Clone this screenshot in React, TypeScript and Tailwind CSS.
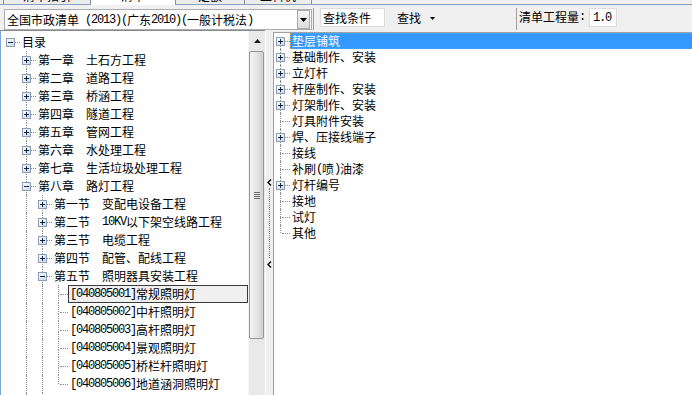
import React from "react";

const cjk = "font-['Noto_Sans_CJK_SC','Noto_Sans_CJK_JP',sans-serif] text-[12px] leading-[14px]";
const mono = "font-['Liberation_Mono',monospace] text-[12px] leading-[14px] tracking-[-1.2px] whitespace-pre";

function T({ s }: { s: string }) {
  const parts = s.match(/[\x00-\x7f]+|[^\x00-\x7f]+/g) || [];
  return (
    <>
      {parts.map((p, i) =>
        /^[\x00-\x7f]/.test(p) ? (
          <span key={i} className={mono}>
            {p}
          </span>
        ) : (
          <span key={i} className={cjk}>
            {p}
          </span>
        )
      )}
    </>
  );
}

function Box({ open }: { open?: boolean }) {
  return (
    <svg width="9" height="9" viewBox="0 0 9 9" className="block">
      <defs>
        <linearGradient id="tvbox" x1="0" y1="0" x2="1" y2="1">
          <stop offset="0" stopColor="#ffffff" />
          <stop offset="1" stopColor="#c9d4e2" />
        </linearGradient>
      </defs>
      <rect x="0.5" y="0.5" width="8" height="8" fill="url(#tvbox)" stroke="#8a9db7" />
      <path d="M2 4.5h5" stroke="#16233d" />
      {!open && <path d="M4.5 2v5" stroke="#16233d" />}
    </svg>
  );
}

type LNode = {
  label: string;
  guides: boolean[];
  last?: boolean;
  noTop?: boolean;
  kids?: boolean;
  open?: boolean;
  sel?: boolean;
};

const dot = "border-dotted border-[#8c8c8c]";

function LeftRow({ n }: { n: LNode }) {
  return (
    <div className="flex h-[18px] items-stretch">
      {n.guides.map((g, i) => (
        <div key={i} className="w-4 shrink-0 h-full">
          {g && <div className={`ml-[8px] h-full border-l ${dot}`} />}
        </div>
      ))}
      <div className="relative w-4 shrink-0 h-full">
        {!n.noTop && <div className={`absolute left-[8px] top-0 h-[9px] border-l ${dot}`} />}
        {!n.last && <div className={`absolute left-[8px] top-[10px] h-[8px] border-l ${dot}`} />}
        <div className={`absolute left-[10px] top-[9px] w-[8px] border-t ${dot}`} />
        {n.kids && (
          <div className="absolute left-[4px] top-[5px]">
            <Box open={n.open} />
          </div>
        )}
      </div>
      <div
        className={`ml-[2px] flex items-center border px-[1px] whitespace-nowrap text-black ${
          n.sel ? "flex-1 border-[#3a3a3a] bg-[#f0f0f0]" : "border-transparent"
        }`}
      >
        <T s={n.label} />
      </div>
    </div>
  );
}

function RightRow({ n }: { n: LNode }) {
  return (
    <div className="flex h-[16px] items-stretch">
      <div className="relative w-[14px] shrink-0 h-full">
        {!n.noTop && <div className={`absolute left-[6px] top-0 h-[8px] border-l ${dot}`} />}
        {!n.last && <div className={`absolute left-[6px] top-[8px] h-[8px] border-l ${dot}`} />}
        <div className={`absolute left-[8px] top-[8px] w-[8px] border-t ${dot}`} />
        {n.kids && (
          <div className="absolute left-[2px] top-[4px]">
            <Box open={n.open} />
          </div>
        )}
      </div>
      <div
        className={`ml-[2px] flex items-center border px-[1px] whitespace-nowrap ${
          n.sel
            ? "min-w-[430px] border-dotted border-[#f08a1c] bg-[#3399ff] text-white"
            : "border-transparent text-black"
        }`}
      >
        <T s={n.label} />
      </div>
    </div>
  );
}

const chapters = [
  "第一章  土石方工程",
  "第二章  道路工程",
  "第三章  桥涵工程",
  "第四章  隧道工程",
  "第五章  管网工程",
  "第六章  水处理工程",
  "第七章  生活垃圾处理工程",
];
const sections = [
  "第一节  变配电设备工程",
  "第二节  10KV以下架空线路工程",
  "第三节  电缆工程",
  "第四节  配管、配线工程",
];
const leaves = [
  "[040805001]常规照明灯",
  "[040805002]中杆照明灯",
  "[040805003]高杆照明灯",
  "[040805004]景观照明灯",
  "[040805005]桥栏杆照明灯",
  "[040805006]地道涵洞照明灯",
];

const leftNodes: LNode[] = [
  { label: "目录", guides: [], noTop: true, last: true, kids: true, open: true },
  ...chapters.map((c) => ({ label: c, guides: [false], kids: true })),
  { label: "第八章  路灯工程", guides: [false], kids: true, open: true },
  ...sections.map((s) => ({ label: s, guides: [false, true], kids: true })),
  { label: "第五节  照明器具安装工程", guides: [false, true], kids: true, open: true },
  ...leaves.map((l, i) => ({
    label: l,
    guides: [false, true, true],
    last: i === leaves.length - 1,
    sel: i === 0,
  })),
  { label: "第六节  防雷接地装置工程", guides: [false, true], kids: true },
];

const rightNodes: LNode[] = [
  { label: "垫层铺筑", guides: [], kids: true, noTop: true, sel: true },
  { label: "基础制作、安装", guides: [], kids: true },
  { label: "立灯杆", guides: [], kids: true },
  { label: "杆座制作、安装", guides: [], kids: true },
  { label: "灯架制作、安装", guides: [], kids: true },
  { label: "灯具附件安装", guides: [] },
  { label: "焊、压接线端子", guides: [], kids: true },
  { label: "接线", guides: [] },
  { label: "补刷(喷)油漆", guides: [] },
  { label: "灯杆编号", guides: [], kids: true },
  { label: "接地", guides: [] },
  { label: "试灯", guides: [] },
  { label: "其他", guides: [], last: true },
];

function Chevron() {
  return (
    <svg width="5" height="7" viewBox="0 0 5 7" className="block">
      <path d="M4 0.5L1 3.5L4 6.5" fill="none" stroke="#000" strokeWidth="1.3" />
    </svg>
  );
}

const tabs = [
  { t: "清单指引", w: "w-[88px]", active: false },
  { t: "清单", w: "w-[85px]", active: true },
  { t: "定额", w: "w-[69px]", active: false },
  { t: "工料机", w: "w-[67px]", active: false },
];

export default function App() {
  return (
    <div className="w-[692px] h-[395px] overflow-hidden bg-[#f0f0f0] flex flex-col">
      {/* tab strip (clipped) */}
      <div className="h-[5px] shrink-0 flex overflow-hidden">
        <div className="w-[3px] border-b border-[#8da2bf]" />
        {tabs.map((tb, i) => (
          <div
            key={i}
            className={`${tb.w} h-[5px] overflow-hidden border-r border-[#8b8f98] ${
              tb.active ? "bg-white" : "bg-[#ececec] border-b border-b-[#8da2bf]"
            } ${i === 0 ? "border-l" : ""}`}
          >
            <div className="-mt-[11px] h-[14px] flex justify-center text-black">
              <T s={tb.t} />
            </div>
          </div>
        ))}
        <div className="flex-1 border-b border-[#7f9db9]" />
      </div>

      {/* toolbar */}
      <div className="h-[25px] shrink-0 flex items-start">
        <div className="ml-[4px] mt-[4px] w-[308px] h-[21px] bg-white border border-[#abadb3] flex items-center">
          <div className="flex-1 pl-[2px] whitespace-nowrap overflow-hidden text-black flex items-center">
            <T s="全国市政清单 (2013)(广东2010)(一般计税法)" />
          </div>
          <div className="mr-px w-[13px] h-[19px] border border-[#a9a9a9] bg-gradient-to-b from-[#f6f6f6] to-[#dcdcdc] flex items-center justify-center">
            <svg width="7" height="4" viewBox="0 0 7 4" className="block">
              <path d="M0 0H7L3.5 4Z" fill="#000" />
            </svg>
          </div>
        </div>
        <div className="ml-px mt-[3px] w-px h-[22px] bg-[#a0a0a0]" />
        <div className="ml-[6px] mt-[3px] w-[65px] h-[19px] bg-white border border-[#dcdcdc] flex items-center pl-[2px] text-black">
          <T s="查找条件" />
        </div>
        <div className="ml-[12px] mt-[5px] h-[16px] flex items-center text-black">
          <T s="查找" />
          <svg width="5" height="3" viewBox="0 0 5 3" className="block ml-[9px]">
            <path d="M0 0H5L2.5 3Z" fill="#000" />
          </svg>
        </div>
        <div className="ml-[81px] mt-[3px] w-px h-[22px] bg-[#a0a0a0]" />
        <div className="ml-[2px] mt-[4px] h-[16px] flex items-center text-black">
          <T s="清单工程量:" />
        </div>
        <div className="ml-[4px] mt-[3px] w-[28px] h-[19px] bg-white border border-[#dcdcdc] flex items-center pl-[3px] text-black">
          <T s="1.0" />
        </div>
      </div>

      {/* main */}
      <div className="flex-1 flex min-h-0">
        {/* left panel */}
        <div className="w-[265px] shrink-0 flex border-t border-t-[#8a8a8a] border-l border-l-[#7ea4d1] bg-white">
          <div className="flex-1 min-w-0 pt-[2px] pl-px overflow-hidden">
            {leftNodes.map((n, i) => (
              <LeftRow key={i} n={n} />
            ))}
          </div>
          {/* scrollbar */}
          <div className="w-[17px] shrink-0 bg-[#e9e9e9] border-l border-[#f4f4f4] flex flex-col">
            <div className="h-[20px] flex items-center justify-center">
              <svg width="7" height="4" viewBox="0 0 7 4" className="block">
                <path d="M3.5 0L7 4H0Z" fill="#1a1a1a" />
              </svg>
            </div>
            <div className="h-[288px] mr-px rounded-[2px] border border-[#979797] bg-gradient-to-r from-[#f3f3f3] via-[#e6e6e6] to-[#cfcfcf] flex flex-col items-center justify-center gap-[1px]">
              <div className="w-[6px] h-px bg-[#6b6b6b]" />
              <div className="w-[6px] h-px bg-[#6b6b6b]" />
              <div className="w-[6px] h-px bg-[#6b6b6b]" />
              <div className="w-[6px] h-px bg-[#6b6b6b]" />
            </div>
          </div>
        </div>

        {/* splitter */}
        <div className="w-[8px] shrink-0 bg-[#efefef] border-l border-white flex flex-col items-center pt-[149px]">
          <Chevron />
          <div className="mt-[2px] h-[70px] border-l border-dotted border-[#3f7ad8]" />
          <div className="mt-[3px]">
            <Chevron />
          </div>
        </div>

        {/* right panel */}
        <div className="flex-1 min-w-0 mt-[2px] bg-white border-t border-l border-[#a0a0a0] overflow-hidden">
          {rightNodes.map((n, i) => (
            <RightRow key={i} n={n} />
          ))}
        </div>
      </div>
    </div>
  );
}
